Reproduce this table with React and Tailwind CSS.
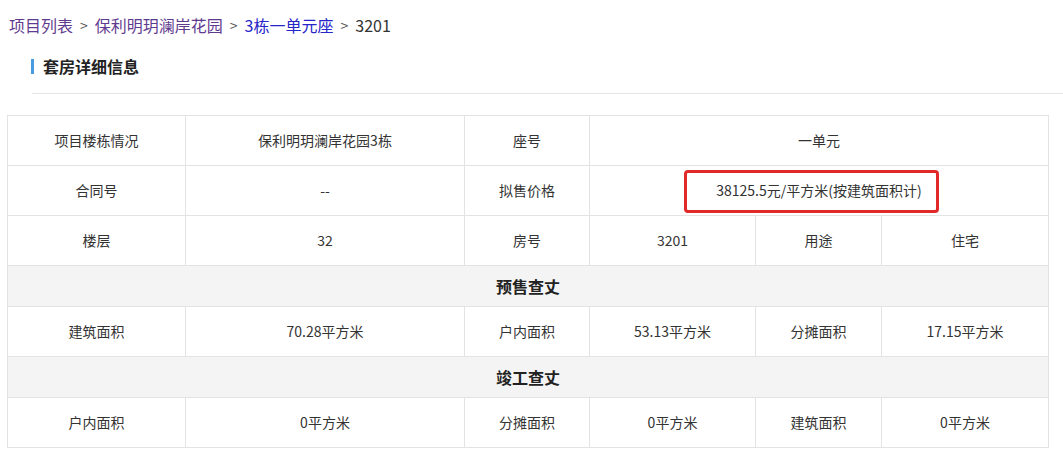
import React from "react";

const font = { fontFamily: '"Microsoft YaHei", "Noto Sans CJK SC", "Noto Sans", sans-serif' };

function Td({ children, colSpan }) {
  return (
    <td colSpan={colSpan} className="border border-[#e3e3e3] text-center align-middle h-[50px] p-0 text-[14px] text-[#333]">
      {children}
    </td>
  );
}

function Section({ children }) {
  return (
    <tr>
      <td colSpan={6} className="border border-[#e3e3e3] bg-[#f4f4f4] text-center align-middle h-[41px] p-0 text-[16px] font-bold text-[#222]">
        {children}
      </td>
    </tr>
  );
}

export default function App() {
  return (
    <div className="relative w-[1063px] h-[460px] bg-white overflow-hidden" style={font}>
      <div className="pl-[9px] pt-[14px] text-[16px] leading-[22px] flex items-center">
        <span className="text-[#5f3b8f]">项目列表</span>
        <span className="text-[#555] text-[14px] mx-[7px]">&gt;</span>
        <span className="text-[#5f3b8f]">保利明玥澜岸花园</span>
        <span className="text-[#555] text-[14px] mx-[7px]">&gt;</span>
        <span className="text-[#2525c8]">3栋一单元座</span>
        <span className="text-[#555] text-[14px] mx-[7px]">&gt;</span>
        <span className="text-[#333]">3201</span>
      </div>
      <div className="ml-[31px] mt-[22px] flex items-center h-[16px]">
        <div className="w-[3px] h-[15px] bg-[#4a9be0]"></div>
        <div className="ml-[9px] text-[16px] font-bold text-[#222] leading-[16px]">套房详细信息</div>
      </div>
      <div className="ml-[32px] mt-[19px] h-px bg-[#e6e6e6]"></div>
      <div className="pl-[7px] pt-[21px]">
        <table className="table-fixed border-collapse w-[1041px]">
          <colgroup>
            <col className="w-[178px]" />
            <col className="w-[279px]" />
            <col className="w-[125px]" />
            <col className="w-[166px]" />
            <col className="w-[126px]" />
            <col className="w-[167px]" />
          </colgroup>
          <tbody>
            <tr>
              <Td>项目楼栋情况</Td>
              <Td>保利明玥澜岸花园3栋</Td>
              <Td>座号</Td>
              <Td colSpan={3}>一单元</Td>
            </tr>
            <tr>
              <Td>合同号</Td>
              <Td>--</Td>
              <Td>拟售价格</Td>
              <Td colSpan={3}>38125.5元/平方米(按建筑面积计)</Td>
            </tr>
            <tr>
              <Td>楼层</Td>
              <Td>32</Td>
              <Td>房号</Td>
              <Td>3201</Td>
              <Td>用途</Td>
              <Td>住宅</Td>
            </tr>
            <Section>预售查丈</Section>
            <tr>
              <Td>建筑面积</Td>
              <Td>70.28平方米</Td>
              <Td>户内面积</Td>
              <Td>53.13平方米</Td>
              <Td>分摊面积</Td>
              <Td>17.15平方米</Td>
            </tr>
            <Section>竣工查丈</Section>
            <tr>
              <Td>户内面积</Td>
              <Td>0平方米</Td>
              <Td>分摊面积</Td>
              <Td>0平方米</Td>
              <Td>建筑面积</Td>
              <Td>0平方米</Td>
            </tr>
          </tbody>
        </table>
      </div>
      <div className="absolute left-[684px] top-[170px] w-[255px] h-[43px] border-[3px] border-[#e02a2a] rounded-[4px] pointer-events-none"></div>
    </div>
  );
}
